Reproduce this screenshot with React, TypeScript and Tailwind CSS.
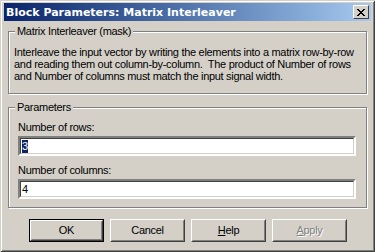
const face = "bg-[#d4d0c8]";

function GroupBox({ title, className, children }: { title: string; className: string; children: React.ReactNode }) {
  return (
    <div
      className={`relative border border-[#808080] shadow-[inset_1px_1px_0_#fff,1px_1px_0_#fff] ${className}`}
    >
      <span className={`absolute left-[6px] top-[-8px] ${face} px-[2px] leading-[14px]`}>{title}</span>
      {children}
    </div>
  );
}

function Field({ value, selected }: { value: string; selected?: boolean }) {
  return (
    <div className="h-[20px] w-[338px] bg-white border-2 border-t-[#808080] border-l-[#808080] border-b-white border-r-white">
      <div className="h-full w-full border border-t-[#404040] border-l-[#404040] border-b-[#d4d0c8] border-r-[#d4d0c8] pl-[1px] flex items-center">
        <span className={selected ? "bg-[#0a246a] text-white leading-[13px]" : "leading-[13px]"}>{value}</span>
      </div>
    </div>
  );
}

function Button({ children, primary, disabled }: { children: React.ReactNode; primary?: boolean; disabled?: boolean }) {
  const inner = (
    <div className="h-full w-full border border-t-white border-l-white border-b-[#404040] border-r-[#404040]">
      <div
        className={`h-full w-full border border-t-[#d4d0c8] border-l-[#d4d0c8] border-b-[#808080] border-r-[#808080] flex items-center justify-center ${
          disabled ? "text-[#808080] [text-shadow:1px_1px_0_#fff]" : ""
        }`}
      >
        {children}
      </div>
    </div>
  );
  return (
    <div className={`h-[23px] w-[75px] ${primary ? "border border-black" : ""}`}>{inner}</div>
  );
}

export default function App() {
  return (
    <div
      className={`w-[375px] h-[252px] ${face} text-black text-[11px] tracking-[-0.3px] flex flex-col px-[4px] pt-[3px] shadow-[inset_1px_1px_0_#d4d0c8,inset_-1px_-1px_0_#404040,inset_2px_2px_0_#fff,inset_-2px_-2px_0_#808080]`}
      style={{ fontFamily: '"Liberation Sans", Arial, sans-serif' }}
    >
      <div className="h-[18px] flex items-center justify-between bg-gradient-to-r from-[#0a246a] to-[#a6caf0] pl-[2px] pr-[2px]">
        <span
          className="text-white font-bold text-[11px] leading-none tracking-normal"
          style={{ fontFamily: '"DejaVu Sans", sans-serif' }}
        >
          Block Parameters: Matrix Interleaver
        </span>
        <div className="h-[14px] w-[16px] bg-[#d4d0c8] border border-t-white border-l-white border-b-[#404040] border-r-[#404040] flex items-center justify-center">
          <svg width="8" height="7" viewBox="0 0 8 7" shapeRendering="crispEdges">
            <path d="M0 0h2v1h-2zM6 0h2v1h-2zM1 1h2v1h-2zM5 1h2v1h-2zM2 2h4v1h-4zM3 3h2v1h-2zM2 4h4v1h-4zM1 5h2v1h-2zM5 5h2v1h-2zM0 6h2v1h-2zM6 6h2v1h-2z" fill="#000" />
          </svg>
        </div>
      </div>

      <GroupBox title="Matrix Interleaver (mask)" className="mt-[10px] mx-[4px] h-[63px] pl-[5px] pt-[14px]">
        <p className="leading-[12px] whitespace-nowrap">
          Interleave the input vector by writing the elements into a matrix row-by-row
          <br />
          and reading them out column-by-column.&nbsp; The product of Number of rows
          <br />
          and Number of columns must match the input signal width.
        </p>
      </GroupBox>

      <GroupBox title="Parameters" className="mt-[13px] mx-[4px] h-[101px] pl-[9px] pt-[13px]">
        <div className="leading-[13px]">Number of rows:</div>
        <div className="mt-[2px]">
          <Field value="3" selected />
        </div>
        <div className="mt-[8px] leading-[13px]">Number of columns:</div>
        <div className="mt-[2px]">
          <Field value="4" />
        </div>
      </GroupBox>

      <div className="mt-[11px] ml-[25px] flex gap-[6px]">
        <Button primary>OK</Button>
        <Button>Cancel</Button>
        <Button>
          <span>
            <span className="underline">H</span>elp
          </span>
        </Button>
        <Button disabled>
          <span>
            <span className="underline">A</span>pply
          </span>
        </Button>
      </div>
    </div>
  );
}
